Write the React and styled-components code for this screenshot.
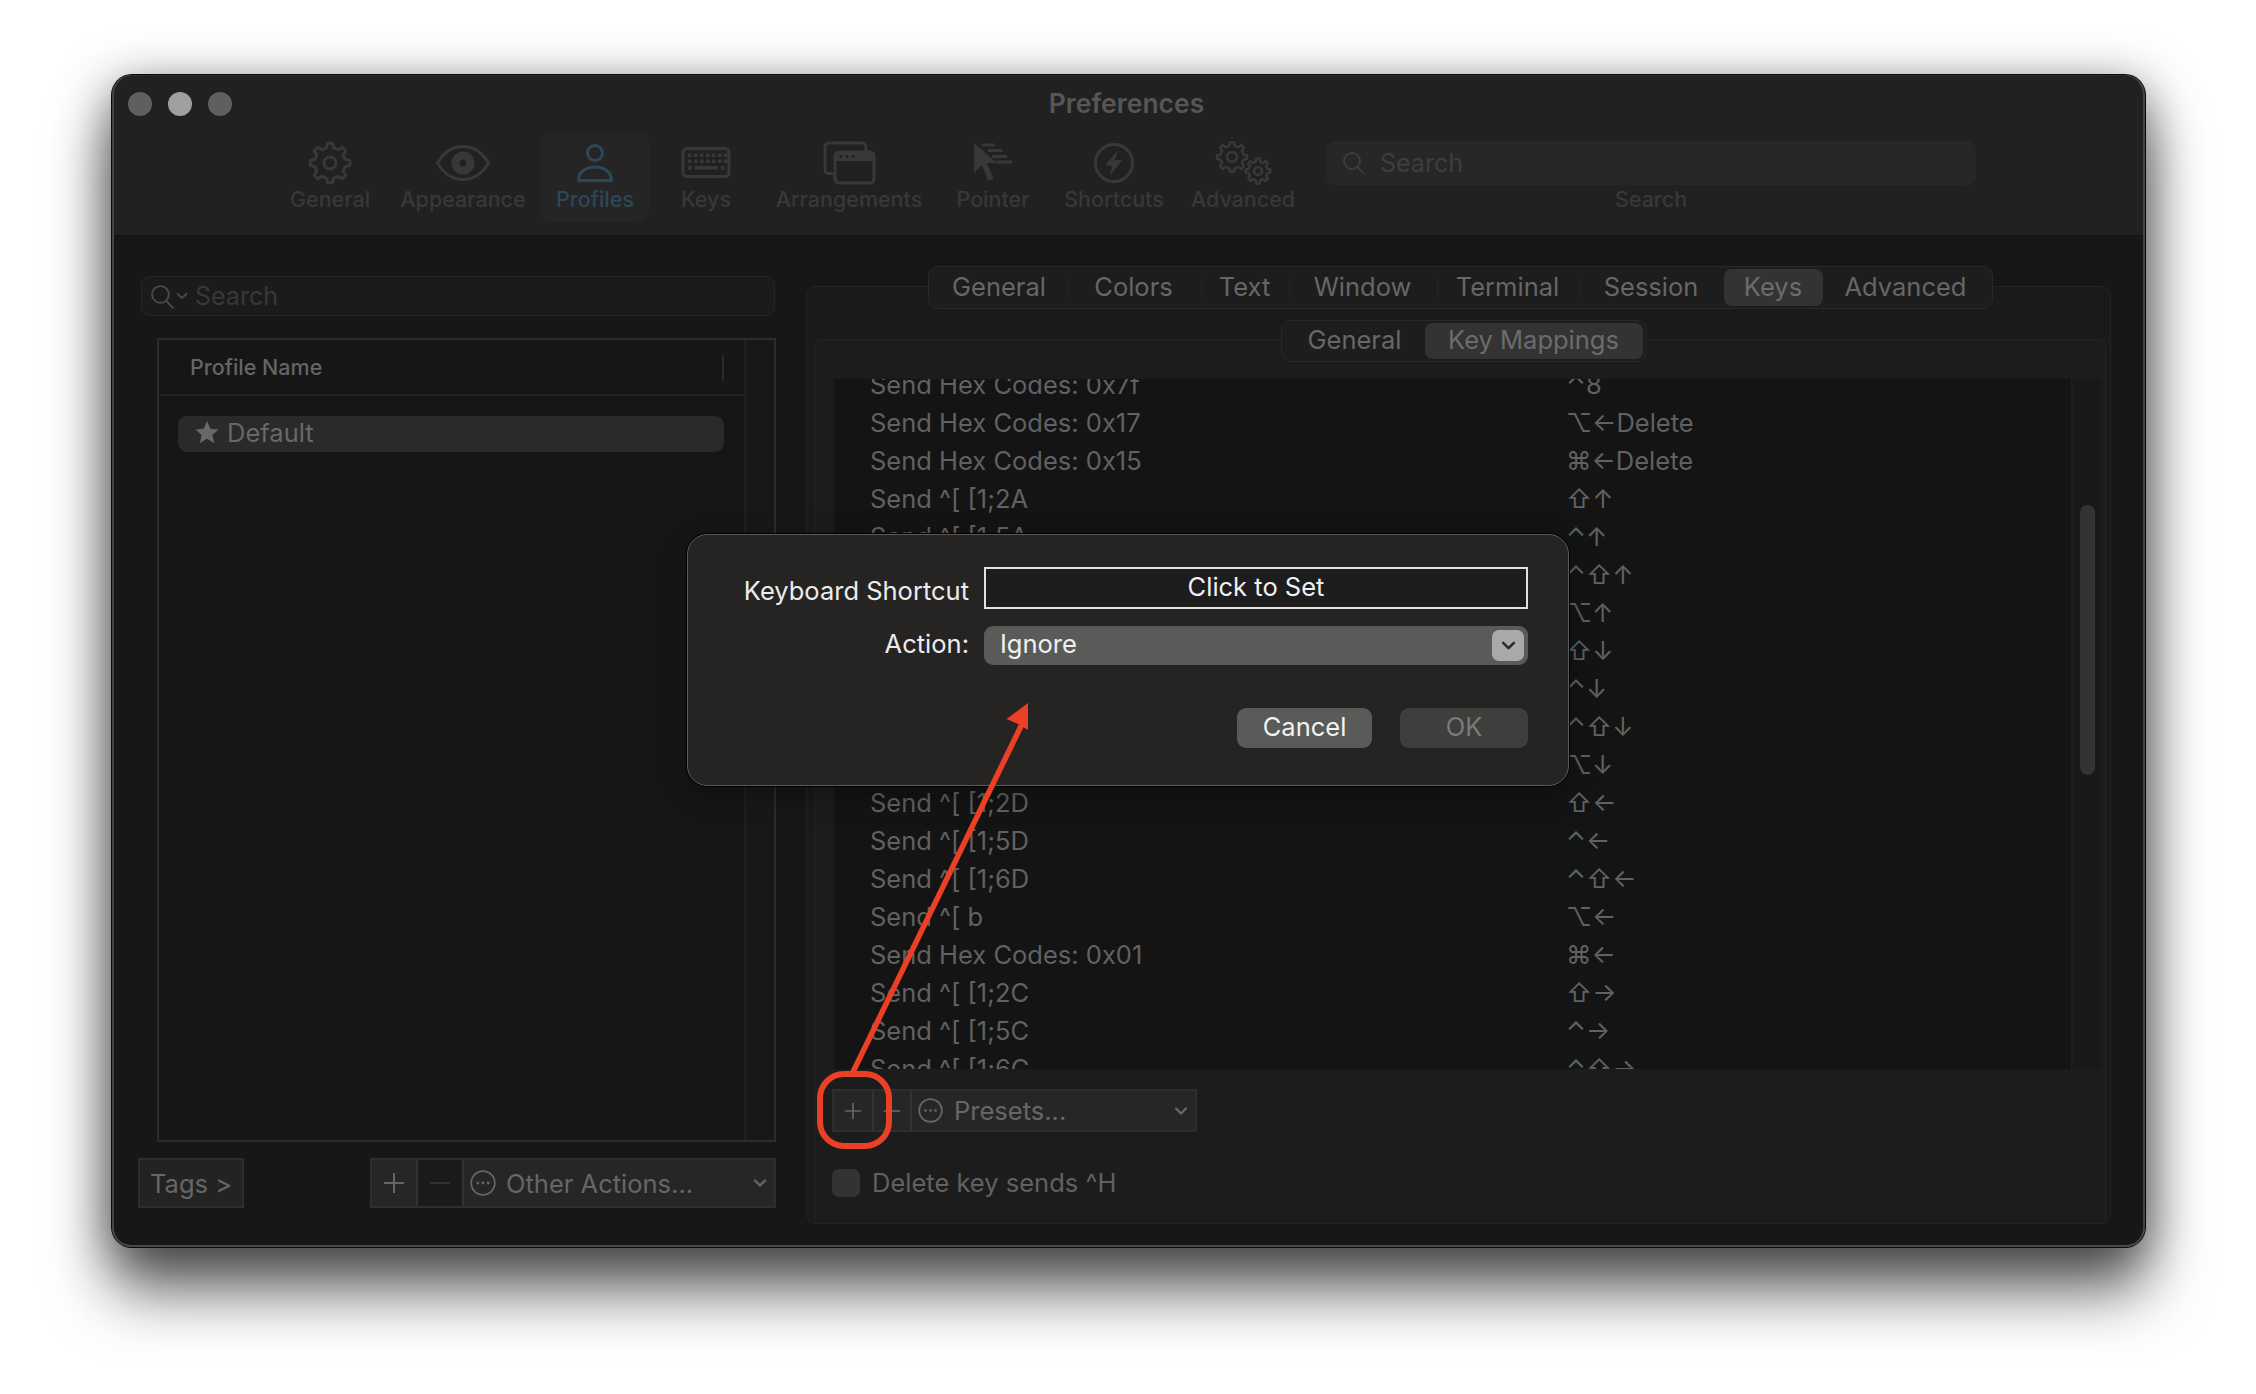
import React from "react"
import styled, { createGlobalStyle } from "styled-components"

const GlobalStyle = createGlobalStyle`
  html, body {
    margin: 0;
    padding: 0;
    background: #fff;
    font-family: Inter, "DejaVu Sans", sans-serif;
  }
`

const Page = styled.div`
  position: relative;
  box-sizing: border-box;
  width: 2256px;
  height: 1394px;
  padding: 75px 111px 0 112px;
  overflow: hidden;
`

const Window = styled.div`
  position: relative;
  box-sizing: border-box;
  height: 1172px;
  display: flex;
  flex-direction: column;
  border-radius: 20px;
  overflow: hidden;
  background: #171717;
`

// the ring sits over the window, the shadow has to live outside of overflow hidden
const WindowFrame = styled.div`
  border-radius: 20px;
  box-shadow: 0 0 0 1px #0a0a0a, 0 46px 62px rgba(0, 0, 0, 0.55), 0 10px 50px rgba(0, 0, 0, 0.5);
`

const Ring = styled.div`
  position: absolute;
  inset: 0;
  border-radius: 20px;
  box-shadow: inset 2px 0 0 #444, inset -2px 0 0 #444, inset 0 -2px 0 #4a4a4a, inset 0 1px 0 #2c2c2c;
  pointer-events: none;
  z-index: 5;
`

const Toolbar = styled.header`
  flex: none;
  box-sizing: border-box;
  height: 161px;
  background: #212121;
  border-bottom: 1px solid #111;
`

const TitleBar = styled.div`
  height: 57px;
  display: grid;
  grid-template-columns: 1fr auto 1fr;
  align-items: center;
  padding: 0 20px 0 16px;
`

const Lights = styled.div`
  display: flex;
  gap: 16px;
`

const Light = styled.span`
  width: 24px;
  height: 24px;
  border-radius: 50%;
  background: ${({ $color }) => $color};
`

const Title = styled.div`
  margin-top: -2px;
  font-size: 26.5px;
  font-weight: 600;
  color: #565656;
`

const Tools = styled.div`
  display: flex;
  align-items: flex-start;
  padding-left: 162px;
`

const ToolItem = styled.div`
  box-sizing: border-box;
  width: ${({ $width }) => $width}px;
  height: 90px;
  padding-top: 9px;
  border-radius: 14px;
  display: flex;
  flex-direction: column;
  align-items: center;
  color: ${({ $active }) => ($active ? "#2c4856" : "#383838")};
  background: ${({ $active }) => ($active ? "#252525" : "transparent")};
`

const ToolIcon = styled.div`
  height: 44px;
  display: flex;
  align-items: center;
  justify-content: center;
`

const ToolLabel = styled.div`
  margin-top: 1px;
  font-size: 21.5px;
  line-height: 26px;
  font-weight: 500;
  white-space: nowrap;
`

const ToolSearch = styled.div`
  margin: 9px 0 0 18px;
  width: 650px;
  display: flex;
  flex-direction: column;
  align-items: center;
`

const ToolSearchField = styled.div`
  box-sizing: border-box;
  width: 100%;
  height: 44px;
  padding-left: 16px;
  display: flex;
  align-items: center;
  gap: 14px;
  border-radius: 9px;
  background: #272727;
  color: #3e3e3e;
  font-size: 25px;
`

const ToolSearchLabel = styled.div`
  margin-top: 1px;
  font-size: 21.5px;
  line-height: 26px;
  font-weight: 500;
  color: #383838;
`

const Body = styled.main`
  flex: 1;
  min-height: 0;
  display: flex;
  gap: 30px;
  padding: 30px 34px 23px 26px;
`

const LeftColumn = styled.section`
  flex: none;
  width: 638px;
  padding-top: 10px;
  display: flex;
  flex-direction: column;
`

const ProfileSearch = styled.div`
  box-sizing: border-box;
  width: 634px;
  height: 40px;
  margin-left: 3px;
  padding-left: 8px;
  display: flex;
  align-items: center;
  gap: 7px;
  border: 1.5px solid #262626;
  border-radius: 9px;
  background: #1b1b1b;
  color: #383838;
  font-size: 25px;
`

const SearchScope = styled.span`
  display: flex;
  align-items: center;
  gap: 1px;
  color: #4a4a4a;
`

const ProfileTable = styled.div`
  box-sizing: border-box;
  width: 619px;
  height: 804px;
  margin: 22px 0 0 19px;
  display: grid;
  grid-template-columns: 1fr 30px;
  border: 2px solid #2c2c2c;
  background: #161616;
`

const ProfileMain = styled.div`
  display: flex;
  flex-direction: column;
`

const ProfileHeader = styled.div`
  position: relative;
  box-sizing: border-box;
  height: 56px;
  padding-left: 31px;
  display: flex;
  align-items: center;
  border-bottom: 2px solid #222;
  font-size: 21.5px;
  font-weight: 500;
  color: #656565;
`

const HeaderDivider = styled.span`
  position: absolute;
  right: 20px;
  top: 15px;
  width: 2px;
  height: 26px;
  background: #2a2a2a;
`

const ProfileRow = styled.div`
  box-sizing: border-box;
  height: 36px;
  margin: 20px 20px 0 19px;
  padding: 0 0 3px 17px;
  display: flex;
  align-items: center;
  gap: 8px;
  border-radius: 9px;
  background: #2a2a2a;
  color: #686868;
  font-size: 25.5px;
`

const TableScroller = styled.div`
  border-left: 2px solid #1f1f1f;
  background: #181818;
`

const ProfileActions = styled.div`
  margin-top: 16px;
  display: flex;
  justify-content: space-between;
`

const TagsButton = styled.div`
  box-sizing: border-box;
  width: 106px;
  height: 50px;
  display: flex;
  align-items: center;
  justify-content: center;
  border: 2px solid #2e2e2e;
  background: #232323;
  color: #666;
  font-size: 25.5px;
`

const ButtonGroup = styled.div`
  box-sizing: border-box;
  width: ${({ $width }) => $width}px;
  height: ${({ $height }) => $height}px;
  display: flex;
  border: 2px solid #2e2e2e;
  background: #262626;
`

const GroupCell = styled.div`
  flex: none;
  box-sizing: border-box;
  width: ${({ $width }) => $width}px;
  display: flex;
  align-items: center;
  justify-content: center;
  border-right: 2px solid #333;
  background: ${({ $dim }) => ($dim ? "#1b1b1b" : "#262626")};
  color: ${({ $dim }) => ($dim ? "#333" : "#666")};
`

const GroupSelect = styled.div`
  flex: 1;
  display: flex;
  align-items: center;
  gap: ${({ $gap }) => $gap}px;
  padding: 0 7px 0 ${({ $inset }) => $inset}px;
  color: #666;
  font-size: 25.5px;
  white-space: nowrap;
`

const GroupArrow = styled.span`
  margin-left: auto;
  display: flex;
`

const RightColumn = styled.section`
  flex: 1;
  min-width: 0;
  display: flex;
  flex-direction: column;
`

const TabPanel = styled.div`
  flex: 1;
  min-height: 0;
  margin-top: 20px;
  display: flex;
  flex-direction: column;
  border: 1.5px solid #242424;
  border-radius: 10px;
  background: #1a1a1a;
`

const Segmented = styled.div`
  flex: none;
  align-self: center;
  box-sizing: border-box;
  height: ${({ $height }) => $height}px;
  margin-top: ${({ $lift }) => -$lift}px;
  margin-left: ${({ $shift }) => $shift}px;
  padding: 2px 3px;
  display: flex;
  border: 1.5px solid #292929;
  border-radius: 10px;
  background: #1d1d1d;
`

const Segment = styled.div`
  position: relative;
  box-sizing: border-box;
  width: ${({ $width }) => $width}px;
  padding-bottom: 3px;
  display: flex;
  align-items: center;
  justify-content: center;
  border-radius: 8px;
  background: ${({ $selected }) => ($selected ? "#333" : "transparent")};
  color: ${({ $selected }) => ($selected ? "#6c6c6c" : "#676767")};
  font-size: 25.5px;
  white-space: nowrap;

  &:not(:first-child)::before {
    content: "";
    position: absolute;
    left: 0;
    top: 8px;
    bottom: 8px;
    width: 1px;
    background: ${({ $divider }) => ($divider ? "#262626" : "transparent")};
  }
`

const InnerPanel = styled.div`
  flex: 1;
  min-height: 0;
  margin: 30px 4px 0 7px;
  display: flex;
  flex-direction: column;
  border: 1.5px solid #232323;
  border-bottom: 0;
  border-radius: 8px 8px 0 0;
  background: #1c1c1c;
`

const MappingTable = styled.div`
  flex: none;
  height: 690px;
  margin: 17px 4px 0 19px;
  display: grid;
  grid-template-columns: 1fr 30px;
  overflow: hidden;
`

const MappingList = styled.div`
  background: #141414;
  overflow: hidden;
`

const MappingRows = styled.div`
  margin-top: -14px;
`

const MappingRow = styled.div`
  height: 38px;
  display: grid;
  grid-template-columns: 696px 1fr;
  padding-left: 36px;
  align-items: center;
  color: #616161;
  font-size: 25.5px;
  white-space: nowrap;
`

const MappingScroller = styled.div`
  padding: 126px 0 0 7px;
  border-left: 2px solid #1f1f1f;
  background: #191919;
`

const ScrollKnob = styled.div`
  width: 15px;
  height: 270px;
  border-radius: 8px;
  background: #333;
`

const MappingControls = styled.div`
  flex: 1;
  padding: 20px 0 0 17px;
  display: flex;
  flex-direction: column;
`

const DeleteOption = styled.label`
  margin-top: 35px;
  display: flex;
  align-items: center;
  gap: 12px;
  color: #616161;
  font-size: 25.5px;
`

const CheckBox = styled.span`
  width: 28px;
  height: 28px;
  border-radius: 7px;
  background: #333;
`

const Dialog = styled.div`
  position: absolute;
  left: 575px;
  top: 459px;
  box-sizing: border-box;
  width: 882px;
  height: 252px;
  padding: 32px 40px 0 0;
  border: 1.5px solid #5a5a58;
  border-radius: 20px;
  background: #252422;
  box-shadow: 0 0 0 1px #000, 0 8px 30px rgba(0, 0, 0, 0.35);
  z-index: 4;
`

const DialogGrid = styled.div`
  display: grid;
  grid-template-columns: 1fr 544px;
  column-gap: 15px;
  row-gap: 17px;
`

const FieldLabel = styled.div`
  justify-self: end;
  align-self: center;
  margin-top: ${({ $offset }) => $offset}px;
  padding-bottom: ${({ $lift }) => $lift || 0}px;
  color: #ececec;
  font-size: 25.5px;
`

const ShortcutField = styled.div`
  box-sizing: border-box;
  height: 42px;
  padding-bottom: 3px;
  display: flex;
  align-items: center;
  justify-content: center;
  border: 2px solid #e2e2e2;
  background: #1d1d1d;
  color: #f0f0f0;
  font-size: 25.5px;
`

const ActionSelect = styled.div`
  box-sizing: border-box;
  height: 39px;
  padding: 0 4px 0 16px;
  display: flex;
  align-items: center;
  justify-content: space-between;
  border-radius: 9px;
  background: #5a5a58;
  color: #f0f0f0;
  font-size: 25.5px;
`

const IgnoreLabel = styled.span`
  padding-bottom: 5px;
`

const SelectArrow = styled.span`
  width: 32px;
  height: 31px;
  display: flex;
  align-items: center;
  justify-content: center;
  border-radius: 7px;
  background: #a9a9a9;
`

const DialogButtons = styled.div`
  margin-top: 43px;
  display: flex;
  justify-content: flex-end;
  gap: 28px;
`

const DialogButton = styled.div`
  box-sizing: border-box;
  width: ${({ $width }) => $width}px;
  height: 40px;
  padding-bottom: 3px;
  display: flex;
  align-items: center;
  justify-content: center;
  border-radius: 9px;
  background: ${({ $disabled }) => ($disabled ? "#3e3e3c" : "#5a5a58")};
  color: ${({ $disabled }) => ($disabled ? "#7a7a78" : "#f2f2f2")};
  font-size: 25.5px;
`

const Annotation = styled.svg`
  position: absolute;
  left: 0;
  top: 0;
  z-index: 6;
  pointer-events: none;
`

const gearPath = (cx, cy, outer, inner, teeth = 8) => {
  const step = (Math.PI * 2) / teeth
  const points = []
  for (let i = 0; i < teeth; i++) {
    const a = i * step - Math.PI / 2
    const at = (r, t) => `${(cx + r * Math.cos(t)).toFixed(2)} ${(cy + r * Math.sin(t)).toFixed(2)}`
    points.push(at(inner, a - step * 0.3), at(outer, a - step * 0.16), at(outer, a + step * 0.16), at(inner, a + step * 0.3))
  }
  return `M${points.join("L")}Z`
}

const GearIcon = () => (
  <svg width="48" height="48" viewBox="0 0 48 48" fill="none" stroke="currentColor" strokeWidth="3" strokeLinejoin="round">
    <path d={gearPath(24, 24, 20, 15.5)} />
    <circle cx="24" cy="24" r="6" />
  </svg>
)

const EyeIcon = () => (
  <svg width="56" height="40" viewBox="0 0 56 40" fill="none" stroke="currentColor" strokeWidth="3">
    <path d="M2.5 20C9 9 18 3.5 28 3.5S47 9 53.5 20C47 31 38 36.5 28 36.5S9 31 2.5 20Z" />
    <circle cx="28" cy="20" r="7.5" strokeWidth="8" />
  </svg>
)

const PersonIcon = () => (
  <svg width="40" height="44" viewBox="0 0 40 44" fill="none" stroke="currentColor" strokeWidth="3">
    <circle cx="20" cy="12" r="7.5" />
    <path d="M3.5 39.5C3.5 31 11 26 20 26S36.5 31 36.5 39.5Z" strokeLinejoin="round" />
  </svg>
)

const KeyboardIcon = () => {
  const top = [0, 1, 2, 3, 4, 5, 6]
  return (
    <svg width="52" height="34" viewBox="0 0 52 34" fill="none">
      <rect x="3" y="2.5" width="46" height="28" rx="4" stroke="currentColor" strokeWidth="3" />
      {top.map((i) => (
        <rect key={`a${i}`} x={8 + i * 6} y="7.5" width="3.5" height="3.5" fill="currentColor" />
      ))}
      {top.map((i) => (
        <rect key={`b${i}`} x={8 + i * 6} y="13.5" width="3.5" height="3.5" fill="currentColor" />
      ))}
      <rect x="8" y="20" width="3.5" height="3.5" fill="currentColor" />
      <rect x="14.5" y="20" width="23" height="3.5" fill="currentColor" />
      <rect x="41" y="20" width="3.5" height="3.5" fill="currentColor" />
    </svg>
  )
}

const WindowsIcon = () => (
  <svg width="54" height="44" viewBox="0 0 54 44" fill="none" stroke="currentColor" strokeWidth="3">
    <path d="M11 32.5H7A4 4 0 0 1 3 28.5V6A4 4 0 0 1 7 2H40A4 4 0 0 1 44 6V10" />
    <rect x="13" y="11" width="39" height="31" rx="4" />
    <path d="M13 15a4 4 0 0 1 4-4h31a4 4 0 0 1 4 4v5H13Z" fill="currentColor" stroke="none" />
    <circle cx="19" cy="15.5" r="1.5" fill="#212121" stroke="none" />
    <circle cx="25" cy="15.5" r="1.5" fill="#212121" stroke="none" />
    <circle cx="31" cy="15.5" r="1.5" fill="#212121" stroke="none" />
  </svg>
)

const PointerIcon = () => (
  <svg width="44" height="44" viewBox="0 0 44 44" fill="none" stroke="currentColor" strokeWidth="3">
    <path d="M3 2V32L11 24L17 40L22.5 38L16 22H26Z" fill="currentColor" stroke="none" />
    <path d="M11 4H24M17 9.5H31M21 15.5H36M25 21H41" />
  </svg>
)

const BoltIcon = () => (
  <svg width="44" height="44" viewBox="0 0 44 44" fill="none" stroke="currentColor" strokeWidth="3">
    <circle cx="22" cy="22" r="18.5" />
    <path d="M26 9L13 24.5H20L18 34.5L30.5 19H23Z" fill="currentColor" stroke="none" />
  </svg>
)

const GearsIcon = () => (
  <svg width="64" height="44" viewBox="0 0 64 44" fill="none" stroke="currentColor" strokeWidth="2.5" strokeLinejoin="round">
    <path d={gearPath(21, 16, 15, 11.5)} />
    <circle cx="21" cy="16" r="5" />
    <path d={gearPath(47, 30, 12.5, 9.5)} />
    <circle cx="47" cy="30" r="4" />
  </svg>
)

const LensIcon = ({ size = 24 }) => (
  <svg width={size} height={size} viewBox="0 0 24 24" fill="none" stroke="currentColor" strokeWidth="1.8">
    <circle cx="10" cy="10" r="8" />
    <path d="M15.5 16L22 23" strokeLinecap="round" />
  </svg>
)

const MoreIcon = ({ size }) => (
  <svg width={size} height={size} viewBox="0 0 26 26" fill="none" stroke="currentColor" strokeWidth="1.8">
    <circle cx="13" cy="13" r="11.8" />
    <circle cx="7.8" cy="13" r="1.4" fill="currentColor" stroke="none" />
    <circle cx="13" cy="13" r="1.4" fill="currentColor" stroke="none" />
    <circle cx="18.2" cy="13" r="1.4" fill="currentColor" stroke="none" />
  </svg>
)

const PlusIcon = ({ size }) => (
  <svg width={size} height={size} viewBox="0 0 22 22" stroke="currentColor" strokeWidth="2">
    <path d="M11 1V21M1 11H21" />
  </svg>
)

const MinusIcon = ({ size }) => (
  <svg width={size} height={size} viewBox="0 0 22 22" stroke="currentColor" strokeWidth="2">
    <path d="M1 11H21" />
  </svg>
)

const ChevronDown = ({ size = 14, color = "#666" }) => (
  <svg width={size} height={size} viewBox="0 0 14 14" fill="none" stroke={color} strokeWidth="2.4" strokeLinecap="round" strokeLinejoin="round">
    <path d="M2 4.5L7 9.5L12 4.5" />
  </svg>
)

const tools = [
  { label: "General", width: 112, icon: <GearIcon /> },
  { label: "Appearance", width: 154, icon: <EyeIcon /> },
  { label: "Profiles", width: 110, icon: <PersonIcon />, active: true },
  { label: "Keys", width: 112, icon: <KeyboardIcon /> },
  { label: "Arrangements", width: 174, icon: <WindowsIcon /> },
  { label: "Pointer", width: 114, icon: <PointerIcon /> },
  { label: "Shortcuts", width: 128, icon: <BoltIcon /> },
  { label: "Advanced", width: 130, icon: <GearsIcon /> },
]

const profileTabs = [
  { label: "General", width: 135, divider: false },
  { label: "Colors", width: 134, divider: true },
  { label: "Text", width: 88, divider: true },
  { label: "Window", width: 148, divider: true },
  { label: "Terminal", width: 142, divider: true },
  { label: "Session", width: 145, divider: true },
  { label: "Keys", width: 99, selected: true },
  { label: "Advanced", width: 166 },
]

const mappings = [
  ["Send Hex Codes: 0x7f", "⌃8"],
  ["Send Hex Codes: 0x17", "⌥←Delete"],
  ["Send Hex Codes: 0x15", "⌘←Delete"],
  ["Send ^[ [1;2A", "⇧↑"],
  ["Send ^[ [1;5A", "⌃↑"],
  ["Send ^[ [1;6A", "⌃⇧↑"],
  ["Send ^[ [1;3A", "⌥↑"],
  ["Send ^[ [1;2B", "⇧↓"],
  ["Send ^[ [1;5B", "⌃↓"],
  ["Send ^[ [1;6B", "⌃⇧↓"],
  ["Send ^[ [1;3B", "⌥↓"],
  ["Send ^[ [1;2D", "⇧←"],
  ["Send ^[ [1;5D", "⌃←"],
  ["Send ^[ [1;6D", "⌃⇧←"],
  ["Send ^[ b", "⌥←"],
  ["Send Hex Codes: 0x01", "⌘←"],
  ["Send ^[ [1;2C", "⇧→"],
  ["Send ^[ [1;5C", "⌃→"],
  ["Send ^[ [1;6C", "⌃⇧→"],
]

export default function App() {
  return (
    <Page>
      <GlobalStyle />
      <WindowFrame>
        <Window>
          <Toolbar>
            <TitleBar>
              <Lights>
                <Light $color="#5f5f5f" />
                <Light $color="#a0a0a0" />
                <Light $color="#5f5f5f" />
              </Lights>
              <Title>Preferences</Title>
            </TitleBar>
            <Tools>
              {tools.map((tool) => (
                <ToolItem key={tool.label} $width={tool.width} $active={tool.active}>
                  <ToolIcon>{tool.icon}</ToolIcon>
                  <ToolLabel>{tool.label}</ToolLabel>
                </ToolItem>
              ))}
              <ToolSearch>
                <ToolSearchField>
                  <LensIcon />
                  Search
                </ToolSearchField>
                <ToolSearchLabel>Search</ToolSearchLabel>
              </ToolSearch>
            </Tools>
          </Toolbar>

          <Body>
            <LeftColumn>
              <ProfileSearch>
                <SearchScope>
                  <LensIcon size={25} />
                  <ChevronDown size={12} color="#4a4a4a" />
                </SearchScope>
                Search
              </ProfileSearch>
              <ProfileTable>
                <ProfileMain>
                  <ProfileHeader>
                    Profile Name
                    <HeaderDivider />
                  </ProfileHeader>
                  <ProfileRow>
                    <svg width="24" height="23" viewBox="0 0 24 23" fill="#686868">
                      <path d="M12 0L15.3 7.7L23.7 8.4L17.3 13.9L19.3 22.2L12 17.8L4.7 22.2L6.7 13.9L.3 8.4L8.7 7.7Z" />
                    </svg>
                    Default
                  </ProfileRow>
                </ProfileMain>
                <TableScroller />
              </ProfileTable>
              <ProfileActions>
                <TagsButton>Tags &gt;</TagsButton>
                <ButtonGroup $width={406} $height={50}>
                  <GroupCell $width={46}>
                    <PlusIcon size={22} />
                  </GroupCell>
                  <GroupCell $width={46} $dim>
                    <MinusIcon size={22} />
                  </GroupCell>
                  <GroupSelect $inset={6} $gap={10}>
                    <MoreIcon size={26} />
                    Other Actions...
                    <GroupArrow>
                      <ChevronDown />
                    </GroupArrow>
                  </GroupSelect>
                </ButtonGroup>
              </ProfileActions>
            </LeftColumn>

            <RightColumn>
              <TabPanel>
                <Segmented $height={43} $lift={21} $shift={3}>
                  {profileTabs.map((tab) => (
                    <Segment key={tab.label} $width={tab.width} $selected={tab.selected} $divider={tab.divider}>
                      {tab.label}
                    </Segment>
                  ))}
                </Segmented>
                <InnerPanel>
                  <Segmented $height={42} $lift={20} $shift={7}>
                    <Segment $width={140}>General</Segment>
                    <Segment $width={218} $selected>
                      Key Mappings
                    </Segment>
                  </Segmented>
                  <MappingTable>
                    <MappingList>
                      <MappingRows>
                        {mappings.map(([action, keys]) => (
                          <MappingRow key={action}>
                            <span>{action}</span>
                            <span>{keys}</span>
                          </MappingRow>
                        ))}
                      </MappingRows>
                    </MappingList>
                    <MappingScroller>
                      <ScrollKnob />
                    </MappingScroller>
                  </MappingTable>
                  <MappingControls>
                    <ButtonGroup $width={365} $height={43}>
                      <GroupCell $width={40}>
                        <PlusIcon size={18} />
                      </GroupCell>
                      <GroupCell $width={38}>
                        <MinusIcon size={18} />
                      </GroupCell>
                      <GroupSelect $inset={6} $gap={11}>
                        <MoreIcon size={25} />
                        Presets...
                        <GroupArrow>
                          <ChevronDown />
                        </GroupArrow>
                      </GroupSelect>
                    </ButtonGroup>
                    <DeleteOption>
                      <CheckBox />
                      Delete key sends ^H
                    </DeleteOption>
                  </MappingControls>
                </InnerPanel>
              </TabPanel>
            </RightColumn>
          </Body>

          <Dialog>
            <DialogGrid>
              <FieldLabel $offset={5}>Keyboard Shortcut</FieldLabel>
              <ShortcutField>Click to Set</ShortcutField>
              <FieldLabel $lift={5}>Action:</FieldLabel>
              <ActionSelect>
                <IgnoreLabel>Ignore</IgnoreLabel>
                <SelectArrow>
                  <ChevronDown size={15} color="#2a2a2a" />
                </SelectArrow>
              </ActionSelect>
            </DialogGrid>
            <DialogButtons>
              <DialogButton $width={135}>Cancel</DialogButton>
              <DialogButton $width={128} $disabled>
                OK
              </DialogButton>
            </DialogButtons>
          </Dialog>
          <Ring />
        </Window>
      </WindowFrame>

      <Annotation width="2256" height="1394" viewBox="0 0 2256 1394" fill="none">
        <rect x="820" y="1074" width="69" height="72" rx="24" stroke="#ea4026" strokeWidth="6" />
        <path d="M853 1072L1023 722" stroke="#ea4026" strokeWidth="5.5" />
        <path d="M1028 703L1028 730L1020 725L1006.5 719Z" fill="#ea4026" />
      </Annotation>
    </Page>
  )
}
